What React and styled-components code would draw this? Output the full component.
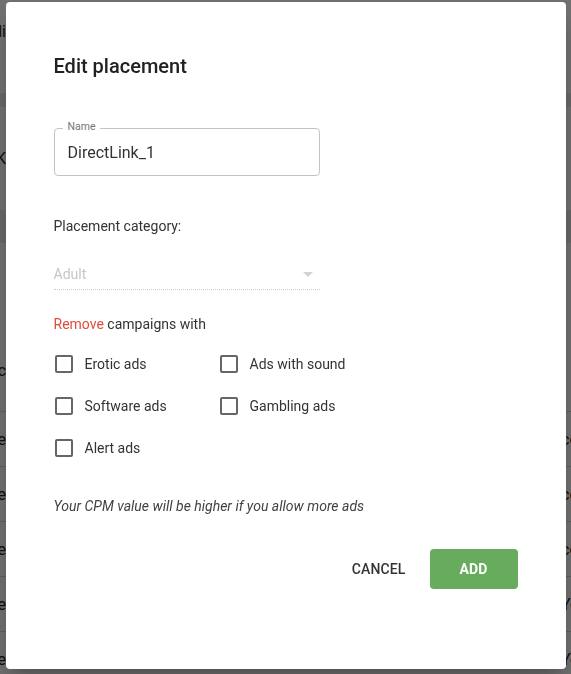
import React from "react";
import styled, { createGlobalStyle } from "styled-components";

const GlobalStyle = createGlobalStyle`
  html, body { margin: 0; padding: 0; }
  body {
    font-family: Roboto, "Noto Sans", "Liberation Sans", sans-serif;
    background: #fff;
    overflow: hidden;
    color: #333;
  }
  * { box-sizing: border-box; }
`;

/* ---------- background page (under the modal) ---------- */
const Page = styled.div`
  height: 674px;
  overflow: hidden;
  display: flex;
  flex-direction: column;
  font-size: 16px;
  color: #222;
`;

const BgRow = styled.div`
  flex: 0 0 ${(p) => p.$h}px;
  display: flex;
  justify-content: space-between;
  align-items: ${(p) => (p.$top ? "flex-start" : "center")};
  padding-top: ${(p) => p.$top || 0}px;
  background: ${(p) => p.$bg || "#fff"};
  border-bottom: ${(p) => (p.$line ? "1px solid #d6d6d6" : "none")};
`;

const LeftPeek = styled.span`
  width: 6px;
  overflow: hidden;
  white-space: nowrap;
  direction: rtl;
`;

const RightPeek = styled.span`
  width: 10px;
  overflow: hidden;
  white-space: nowrap;
`;

/* ---------- modal ---------- */
const Overlay = styled.div`
  position: fixed;
  inset: 0;
  background: rgba(0, 0, 0, 0.56);
  display: flex;
  justify-content: center;
  align-items: flex-start;
  padding-top: 2px;
`;

const Dialog = styled.div`
  width: 560px;
  background: #fff;
  border-radius: 4px;
  padding: 48px 48px 80px;
  display: flex;
  flex-direction: column;
  box-shadow: 0 11px 15px -7px rgba(0, 0, 0, 0.2),
    0 24px 38px 3px rgba(0, 0, 0, 0.14);
`;

const Title = styled.h2`
  margin: 0;
  font-size: 20px;
  font-weight: 500;
  line-height: 32px;
  color: #212121;
`;

const Field = styled.div`
  position: relative;
  margin-top: 46px;
  width: 266px;
  height: 48px;
  border: 1px solid #c4c4c4;
  border-radius: 4px;
  padding: 0 13px;
  display: flex;
  align-items: center;
  font-size: 16px;
  color: #333;
`;

const FloatLabel = styled.span`
  position: absolute;
  top: -9px;
  left: 8px;
  padding: 0 5px;
  background: #fff;
  font-size: 10.5px;
  line-height: 14px;
  color: #757575;
`;

const SectionLabel = styled.div`
  margin-top: ${(p) => p.$mt}px;
  font-size: 14px;
  line-height: 20px;
  color: #333;
`;

const Accent = styled.span`
  color: #e04b3b;
`;

const Select = styled.div`
  margin-top: 22px;
  width: 266px;
  height: 32px;
  border-bottom: 1px dotted #cfcfcf;
  display: flex;
  align-items: center;
  justify-content: space-between;
  font-size: 14px;
  color: #c6c6c6;
`;

const Checks = styled.div`
  margin-top: 9px;
  display: grid;
  grid-template-columns: 165px auto;
  grid-auto-rows: 42px;
  justify-content: start;
`;

const CheckItem = styled.label`
  display: flex;
  align-items: center;
  gap: 12px;
  font-size: 14px;
  color: #333;
  cursor: pointer;
`;

const Box = styled.span`
  width: 18px;
  height: 18px;
  margin-left: 1px;
  border: 2px solid #666;
  border-radius: 2px;
`;

const Note = styled.p`
  margin: 27px 0 0;
  font-size: 14px;
  line-height: 20px;
  font-style: italic;
  color: #424242;
`;

const Actions = styled.div`
  margin-top: 33px;
  display: flex;
  justify-content: flex-end;
  gap: 8px;
`;

const Button = styled.button`
  height: 40px;
  padding: 0 16px;
  min-width: ${(p) => (p.$primary ? "88px" : "0")};
  border: none;
  border-radius: 4px;
  font-family: inherit;
  font-size: 14px;
  font-weight: ${(p) => (p.$primary ? 700 : 500)};
  text-transform: uppercase;
  letter-spacing: 0.01em;
  background: ${(p) => (p.$primary ? "#66ac5c" : "transparent")};
  color: ${(p) => (p.$primary ? "#fff" : "#333")};
  cursor: pointer;
`;

const options = [
  "Erotic ads",
  "Ads with sound",
  "Software ads",
  "Gambling ads",
  "Alert ads",
];

const bgRows = [
  { h: 93, top: 22, l: "li", r: "" },
  { h: 14, bg: "#ececec", l: "", r: "" },
  { h: 103, l: "OK", r: "" },
  { h: 33, bg: "#ececec", l: "", r: "" },
  { h: 169, top: 118, l: "Inc", r: "", line: true },
  { h: 55, l: "Type", r: "com", line: true },
  { h: 55, l: "Type", r: "com", line: true },
  { h: 55, l: "Type", r: "com", line: true },
  { h: 55, l: "Desktop Store", r: "Yes", line: true },
  { h: 55, l: "Desktop Store", r: "Yes", line: true },
];

export default function App() {
  return (
    <>
      <GlobalStyle />
      <Page>
        {bgRows.map((r, i) => (
          <BgRow key={i} $h={r.h} $bg={r.bg} $top={r.top} $line={r.line}>
            <LeftPeek>{r.l}</LeftPeek>
            <RightPeek>{r.r}</RightPeek>
          </BgRow>
        ))}
      </Page>
      <Overlay>
        <Dialog>
          <Title>Edit placement</Title>
          <Field>
            <FloatLabel>Name</FloatLabel>
            DirectLink_1
          </Field>
          <SectionLabel $mt={40}>Placement category:</SectionLabel>
          <Select>
            <span>Adult</span>
            <svg width="24" height="24" viewBox="0 0 24 24">
              <path d="M7 10l5 5 5-5z" fill="#d2d2d2" />
            </svg>
          </Select>
          <SectionLabel $mt={24}>
            <Accent>Remove</Accent> campaigns with
          </SectionLabel>
          <Checks>
            {options.map((o) => (
              <CheckItem key={o}>
                <Box />
                {o}
              </CheckItem>
            ))}
          </Checks>
          <Note>Your CPM value will be higher if you allow more ads</Note>
          <Actions>
            <Button>Cancel</Button>
            <Button $primary>Add</Button>
          </Actions>
        </Dialog>
      </Overlay>
    </>
  );
}
